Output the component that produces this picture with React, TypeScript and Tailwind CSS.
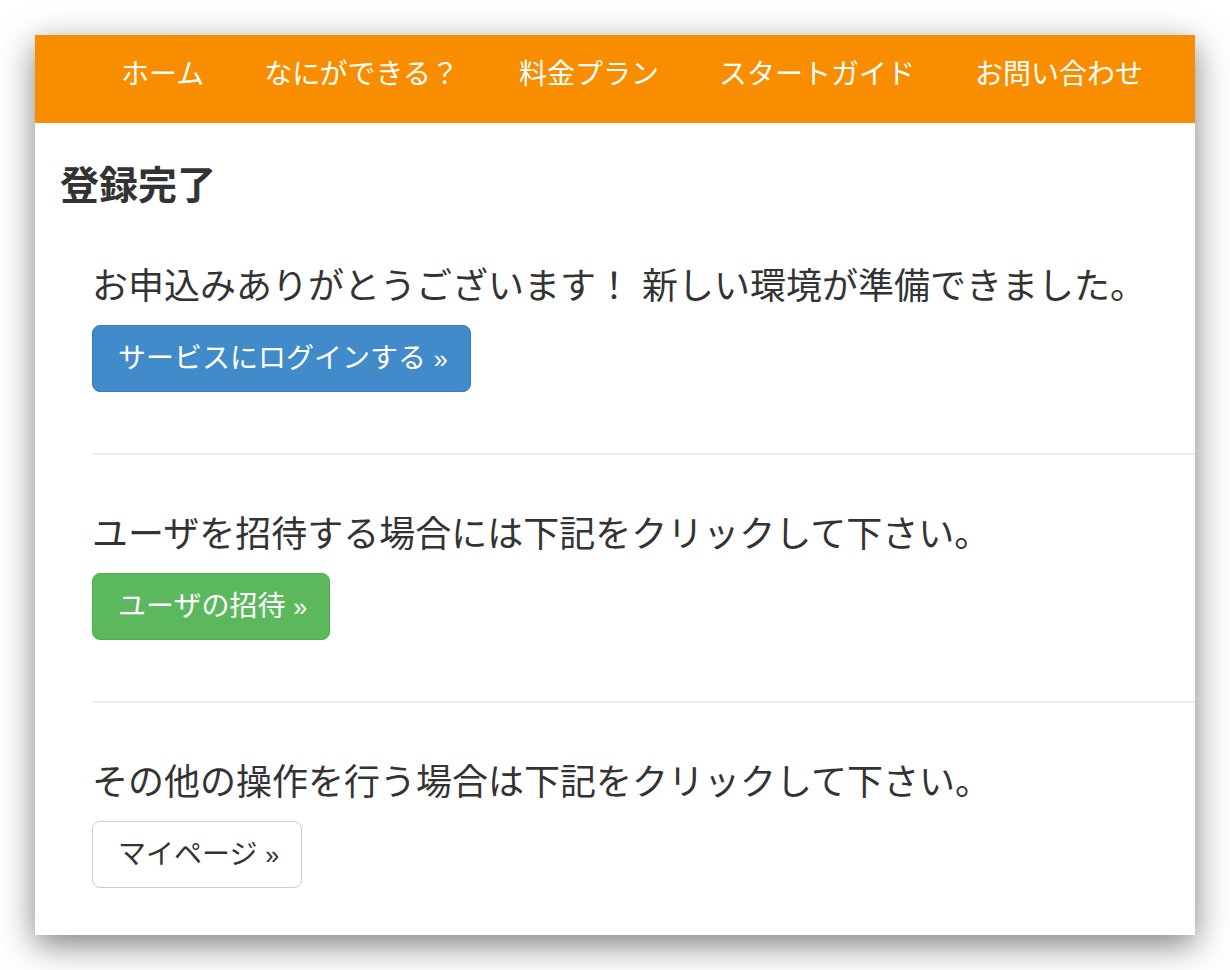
const font = '[font-family:"Liberation_Sans","Noto_Sans_CJK_JP",sans-serif]';

const navItems = ['ホーム', 'なにができる？', '料金プラン', 'スタートガイド', 'お問い合わせ'];

type Step = { text: string; label: string; variant: 'primary' | 'success' | 'default' };

const steps: Step[] = [
  { text: 'お申込みありがとうございます！ 新しい環境が準備できました。', label: 'サービスにログインする', variant: 'primary' },
  { text: 'ユーザを招待する場合には下記をクリックして下さい。', label: 'ユーザの招待', variant: 'success' },
  { text: 'その他の操作を行う場合は下記をクリックして下さい。', label: 'マイページ', variant: 'default' },
];

const btnStyles = {
  primary: 'bg-[#428bca] border-[#357ebd] text-white',
  success: 'bg-[#5cb85c] border-[#4cae4c] text-white',
  default: 'bg-white border-[#cccccc] text-[#333333]',
};

export default function App() {
  return (
    <div className={`min-h-[970px] bg-white pt-[35px] pl-[35px] ${font}`}>
      <div className="w-[1160px] h-[900px] bg-white shadow-[0_10px_32px_rgba(0,0,0,0.5)] overflow-hidden">
        {/* navbar */}
        <nav className="h-[88px] bg-[#f98d00] flex items-center pl-[56px] pb-[9px]">
          {navItems.map((item) => (
            <a key={item} className="px-[30px] text-[28px] leading-[40px] text-white">
              {item}
            </a>
          ))}
        </nav>

        <main className="pl-[25px]">
          <h2 className="mt-[39px] text-[39px] leading-[48px] font-bold text-[#333333]">登録完了</h2>

          <div className="ml-[32px] mt-[51px]">
            {steps.map((s, i) => (
              <div key={i}>
                {i > 0 && <div className="h-[2px] bg-[#eeeeee] mt-[61px] mb-[54px]" />}
                <p className="text-[36px] leading-[52px] text-[#333333]">{s.text}</p>
                <button
                  className={`mt-[12px] h-[67px] pl-[25px] pr-[22px] border rounded-[8px] text-[28px] leading-[40px] ${btnStyles[s.variant]}`}
                >
                  {s.label} <span className="text-[25px]">»</span>
                </button>
              </div>
            ))}
          </div>
        </main>
      </div>
    </div>
  );
}
